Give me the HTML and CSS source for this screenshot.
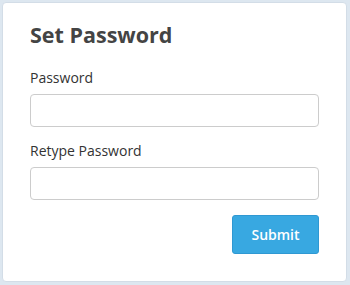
FILE: index.html
```html
<!DOCTYPE html>
<html>
<head>
<meta charset="utf-8">
<link rel="stylesheet" href="styles.css">
</head>
<body>
<div class="card">
  <h1 class="title">Set Password</h1>
  <label class="label" for="pw">Password</label>
  <input class="input" id="pw" type="password">
  <label class="label label-second" for="pw2">Retype Password</label>
  <input class="input" id="pw2" type="password">
  <div class="actions">
    <button class="btn" type="button">Submit</button>
  </div>
</div>
</body>
</html>
```
FILE: styles.css
```css
html, body {
  margin: 0;
  padding: 0;
  background: #dde7f0;
  font-family: "Open Sans", "Noto Sans", sans-serif;
}
body {
  width: 350px;
  height: 285px;
  box-sizing: border-box;
  padding: 2px 3px 3px 2px;
}
.card {
  box-sizing: border-box;
  height: 280px;
  background: #ffffff;
  border: 1px solid #d3dde7;
  border-radius: 4px;
  padding: 20px 27px 0 27px;
  display: flex;
  flex-direction: column;
}
.title {
  margin: 0;
  font-size: 21.5px;
  line-height: 24px;
  font-weight: 700;
  color: #444444;
}
.label {
  display: block;
  margin-top: 21px;
  font-size: 14px;
  line-height: 20px;
  color: #333333;
}
.label-second {
  margin-top: 14px;
}
.input {
  display: block;
  box-sizing: border-box;
  margin-top: 6px;
  width: 100%;
  height: 33px;
  border: 1px solid #cccccc;
  border-radius: 4px;
  background: #fff;
  padding: 0 10px;
  font-size: 14px;
  font-family: inherit;
}
.actions {
  display: flex;
  justify-content: flex-end;
  margin-top: 15px;
}
.btn {
  box-sizing: border-box;
  width: 87px;
  height: 39px;
  background: #38a8e1;
  border: 1px solid #2f98d2;
  border-radius: 3px;
  color: #ffffff;
  font-family: inherit;
  font-size: 14px;
  font-weight: 600;
  padding: 0;
}
```
